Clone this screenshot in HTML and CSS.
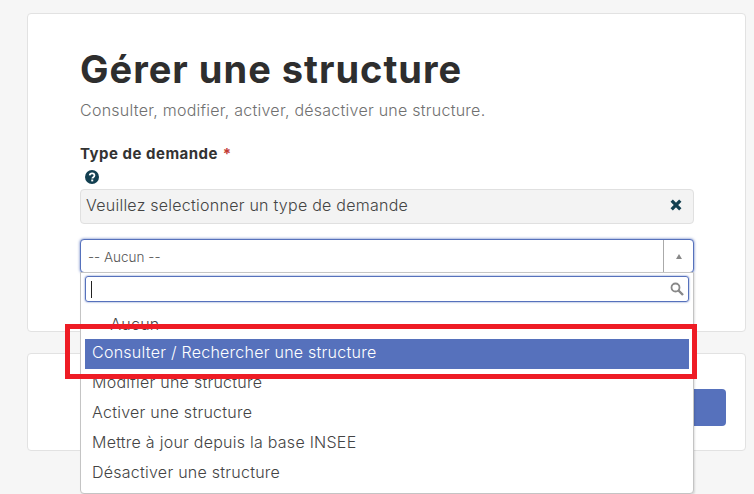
FILE: index.html
```html
<!DOCTYPE html>
<html lang="fr">
<head>
<meta charset="utf-8">
<title>Gérer une structure</title>
<link rel="stylesheet" href="styles.css">
</head>
<body>
<main class="page">
  <section class="card card-main">
    <h1 class="title">Gérer une structure</h1>
    <p class="subtitle">Consulter, modifier, activer, désactiver une structure.</p>
    <div class="label-row"><span class="label">Type de demande</span> <span class="req">*</span></div>
    <div class="help">
      <svg class="help-icon" viewBox="0 0 24 24" width="14" height="14" aria-hidden="true">
        <circle cx="12" cy="12" r="12" fill="#123f50"/>
        <path d="M8 9.4c.3-2.3 2-3.6 4.2-3.6 2.300 0 4 1.500 4 3.500 0 3-3.700 3-3.700 5.400" fill="none" stroke="#fff" stroke-width="3"/>
        <rect x="10.700" y="16.300" width="3.400" height="3.200" fill="#fff"/>
      </svg>
    </div>
    <div class="notice">
      <span>Veuillez selectionner un type de demande</span>
      <svg class="close-icon" viewBox="0 0 12 12" width="12" height="12" aria-hidden="true">
        <path d="M1.700 1.700 10.300 10.300M10.300 1.700 1.700 10.300" fill="none" stroke="#123f50" stroke-width="3.300"/>
      </svg>
    </div>
    <div class="combo">
      <span class="combo-value">-- Aucun --</span>
      <span class="combo-arrow"><span class="arrow-up"></span></span>
    </div>
  </section>
  <section class="card card-actions">
    <div class="action-button"></div>
  </section>
</main>
<div class="dropdown">
  <div class="search">
    <span class="caret"></span>
    <svg class="search-icon" viewBox="0 0 14 14" width="14" height="14" aria-hidden="true">
      <circle cx="5.500" cy="5.500" r="4" fill="none" stroke="#888" stroke-width="1.800"/>
      <path d="M8.500 8.500 13 13" stroke="#888" stroke-width="2.400"/>
    </svg>
  </div>
  <ul class="options">
    <li class="option option-first"><span class="dashes">--</span> Aucun <span class="dashes">--</span></li>
    <li class="option option-active">Consulter / Rechercher une structure</li>
    <li class="option">Modifier une structure</li>
    <li class="option">Activer une structure</li>
    <li class="option">Mettre à jour depuis la base INSEE</li>
    <li class="option">Désactiver une structure</li>
  </ul>
</div>
<div class="highlight"></div>
</body>
</html>
```
FILE: styles.css
```css
* { box-sizing: border-box; }
html, body { margin: 0; height: 100%; }
body {
  position: relative;
  overflow: hidden;
  background: #f6f6f6;
  font-family: Inter, "Liberation Sans", sans-serif;
  color: #444;
}
.page {
  display: flex;
  flex-direction: column;
  gap: 21px;
  padding: 13px 8px 0 27px;
}
.card {
  background: #fff;
  border: 1px solid #e2e2e2;
  border-radius: 4px;
}
.card-main {
  height: 319px;
  padding: 31px 52px 0;
}
.card-actions {
  height: 98px;
  display: flex;
  justify-content: flex-end;
  padding: 35px 19px 0 0;
}
.action-button {
  width: 200px;
  height: 37px;
  background: #5671bc;
  border-radius: 4px;
}
.title {
  margin: 0;
  font-size: 38px;
  line-height: 48px;
  font-weight: 700;
  color: #2e2e2e;
  letter-spacing: 1px;
}
.subtitle {
  margin: 7px 0 0;
  font-size: 16px;
  line-height: 20px;
  font-weight: 300;
  color: #707070;
  letter-spacing: 0.25px;
}
.label-row {
  margin-top: 24px;
  height: 20px;
  font-size: 15px;
  line-height: 20px;
  letter-spacing: 0.5px;
}
.label { font-weight: 700; color: #333; }
.req { color: #c23934; font-weight: 700; }
.help {
  display: flex;
  height: 25px;
  padding: 6px 0 0 5px;
}
.notice {
  display: flex;
  align-items: center;
  justify-content: space-between;
  width: 614px;
  height: 35px;
  padding: 0 11px 4px 5px;
  background: #f3f3f3;
  border: 1px solid #e0e0e0;
  border-radius: 4px;
  font-size: 16px;
  font-weight: 300;
  color: #444;
  letter-spacing: 0.25px;
}
.combo {
  display: flex;
  justify-content: space-between;
  width: 614px;
  height: 34px;
  margin-top: 15px;
  background: #fff;
  border: 1px solid #5671bc;
  border-radius: 4px;
  box-shadow: 0 0 3px #5671bc;
}
.combo-value {
  padding-left: 7px;
  font-size: 13.500px;
  line-height: 34px;
  font-weight: 300;
  color: #555;
}
.combo-arrow {
  display: flex;
  align-items: center;
  justify-content: center;
  width: 30px;
  border-left: 1px solid #aaa;
}
.arrow-up {
  width: 0;
  height: 0;
  border-left: 3.500px solid transparent;
  border-right: 3.500px solid transparent;
  border-bottom: 5px solid #888;
}
.dropdown {
  position: absolute;
  left: 80px;
  top: 272px;
  width: 614px;
  height: 222px;
  padding: 3px 4px 0;
  background: #fff;
  border: 1px solid #c4c4c4;
  border-radius: 0 0 4px 4px;
  box-shadow: 1px 1px 2px rgba(0, 0, 0, 0.12);
}
.search {
  display: flex;
  align-items: center;
  justify-content: space-between;
  width: 604px;
  height: 26px;
  padding: 0 4px 0 5px;
  border: 1px solid #5671bc;
  border-radius: 3px;
  box-shadow: 0 0 2px #5671bc;
}
.caret {
  width: 1px;
  height: 17px;
  background: #222;
}
.options {
  list-style: none;
  margin: 7px 0 0;
  padding: 0;
  width: 604px;
}
.option {
  height: 30px;
  padding-left: 7px;
  font-size: 16px;
  line-height: 27px;
  font-weight: 300;
  color: #444;
  letter-spacing: 0.25px;
}
.option-first { line-height: 31px; }
.dashes { letter-spacing: -0.5px; }
.option-active {
  background: #5671bc;
  color: #fff;
}
.highlight {
  position: absolute;
  left: 65px;
  top: 324px;
  width: 632px;
  height: 55px;
  border: 5px solid #ee1c25;
}
```
